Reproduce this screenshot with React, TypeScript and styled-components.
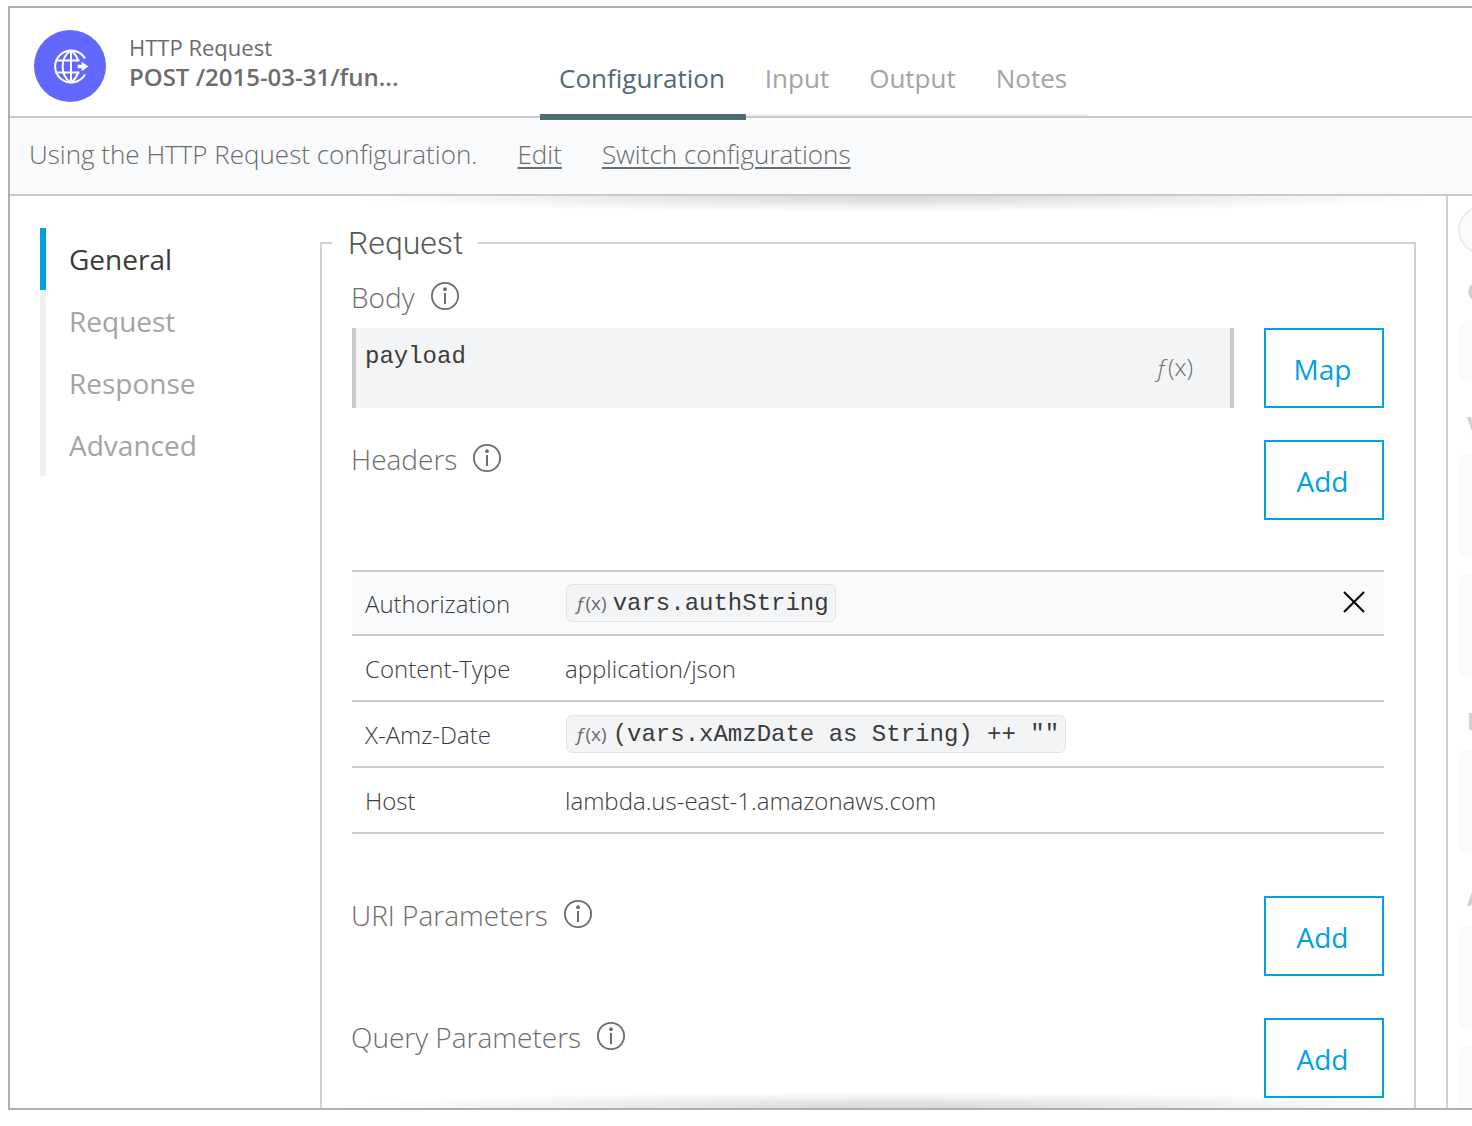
import React, { useState } from "react";
import styled, { createGlobalStyle } from "styled-components";

const sans = '"Open Sans", "Noto Sans", sans-serif';
const mono = '"Liberation Mono", monospace';

const color = {
  frame: "#aeafaf",
  line: "#c9cacb",
  field: "#d1d1d1",
  faint: "#f0f0f0",
  banner: "#f9fafb",
  text: "#3a3b3c",
  muted: "#6b6c6d",
  disabled: "#a3a4a4",
  teal: "#506a73",
  blue: "#00a2df",
  badge: "#6168fb",
};

const GlobalStyle = createGlobalStyle`
  *, *::before, *::after { box-sizing: border-box; }
  body { margin: 0; background: #fff; font-family: ${sans}; color: ${color.text}; }
  button, textarea { font: inherit; color: inherit; margin: 0; padding: 0; border: 0; background: none; }
  button { cursor: pointer; }
`;

const Frame = styled.div`
  display: flex;
  flex-direction: column;
  height: calc(100vh - 22px);
  margin: 6px 0 16px 8px;
  border: 2px solid ${color.frame};
  border-right: 0;
  overflow: hidden;
`;

const Header = styled.header`
  display: flex;
  flex: none;
  height: 110px;
  border-bottom: 2px solid ${color.line};
`;

const Identity = styled.div`
  display: flex;
  align-items: flex-start;
  gap: 23px;
  flex: 0 0 530px;
  padding: 22px 24px 0;
`;

const Titles = styled.div`
  padding-top: 2px;
  line-height: 30px;
  color: ${color.muted};
`;

const Kind = styled.div`
  font-size: 22px;
`;

const Title = styled.h1`
  margin: 0;
  font-size: 24px;
  font-weight: 600;
`;

const TabList = styled.div`
  display: flex;
  align-items: stretch;
`;

const Tab = styled.button<{ $active: boolean }>`
  position: relative;
  display: flex;
  align-items: flex-start;
  padding: 52px 21px 0 19px;
  margin-bottom: ${(p) => (p.$active ? "-4px" : "0")};
  border-bottom: ${(p) => (p.$active ? `6px solid ${color.teal}` : `2px solid ${color.faint}`)};
  font-size: 26px;
  line-height: 36px;
  color: ${(p) => (p.$active ? color.teal : color.disabled)};
`;

const Banner = styled.div`
  display: flex;
  flex: none;
  align-items: center;
  gap: 40px;
  height: 78px;
  padding: 0 19px 4px;
  border-bottom: 2px solid ${color.line};
  background: ${color.banner};
  font-size: 26px;
  font-weight: 300;
  color: ${color.muted};
`;

const BannerLink = styled.a`
  color: inherit;
  text-decoration: underline;
  text-decoration-thickness: 2px;
  text-underline-offset: 3px;
`;

const Main = styled.div`
  display: flex;
  flex: 1;
  min-height: 0;
`;

const SideNav = styled.nav`
  flex: 0 0 310px;
  padding: 32px 30px;
`;

const NavItem = styled.button<{ $active: boolean }>`
  display: block;
  width: 100%;
  height: 62px;
  padding: 0 0 0 23px;
  border-left: 6px solid ${(p) => (p.$active ? color.blue : color.faint)};
  text-align: left;
  font-size: 28px;
  color: ${(p) => (p.$active ? color.text : color.disabled)};
`;

const Center = styled.main`
  flex: 1;
  min-width: 0;
  padding: 25px 30px 0 0;
  overflow: hidden;
  background:
    radial-gradient(farthest-side at 50% 0, rgba(0, 0, 0, 0.16), transparent) right top / calc(100% - 20px) 16px no-repeat,
    radial-gradient(farthest-side at 50% 100%, rgba(0, 0, 0, 0.16), transparent) right bottom / calc(100% - 20px) 16px no-repeat;
`;

const Group = styled.fieldset`
  margin: 0;
  padding: 13px 30px 40px;
  border: 2px solid ${color.field};
  min-width: 0;
`;

const Legend = styled.legend`
  margin-left: -20px;
  padding: 0 15px 0 16px;
  font-family: Roboto, ${sans};
  font-size: 32px;
  font-weight: 300;
  line-height: 44px;
  color: #58595a;
`;

const Row = styled.div<{ $gap?: number }>`
  display: flex;
  align-items: flex-start;
  justify-content: space-between;
  gap: 30px;
  margin-top: ${(p) => p.$gap ?? 0}px;
`;

const FieldHead = styled.div`
  display: flex;
  align-items: center;
  gap: 16px;
  height: 40px;
  margin-left: -1px;
  padding-bottom: 2px;
  font-size: 28px;
  font-weight: 300;
  color: ${color.muted};
`;

const InfoButton = styled.button`
  display: flex;
  padding-bottom: 2px;
`;

const OutlineButton = styled.button`
  flex: none;
  width: 120px;
  height: 80px;
  padding: 2px 3px 0 0;
  border: 2px solid ${color.blue};
  background: #fff;
  font-size: 28px;
  color: ${color.blue};
`;

const Expression = styled.div`
  display: flex;
  flex: 1;
  height: 80px;
  padding-right: 37px;
  border: solid ${color.line};
  border-width: 0 4px;
  background: #f3f4f6;
`;

const ExpressionInput = styled.textarea`
  flex: 1;
  min-width: 0;
  padding: 14px 9px;
  outline: 0;
  resize: none;
  overflow: hidden;
  font-family: ${mono};
  font-size: 24px;
  line-height: 30px;
`;

const FxToggle = styled.button`
  padding-bottom: 4px;
  font-size: 24px;
  font-weight: 300;
  color: ${color.muted};
`;

const FxGlyph = styled.span`
  font-style: italic;
`;

const Table = styled.table`
  width: 100%;
  margin-top: 50px;
  border-collapse: separate;
  border-spacing: 0;
  table-layout: fixed;
  font-size: 24px;
  font-weight: 300;
`;

const HeaderRow = styled.tr<{ $selected: boolean }>`
  background: ${(p) => (p.$selected ? color.banner : "transparent")};

  & > * {
    height: 66px;
    padding: 0;
    border-bottom: 2px solid ${color.line};
    text-align: left;
    font-weight: 300;
  }

  &:first-child > * {
    border-top: 2px solid ${color.line};
  }
`;

const NameCell = styled.th`
  width: 213px;

  && {
    padding-left: 13px;
  }
`;

const ActionCell = styled.td`
  width: 60px;
`;

const Chip = styled.span`
  display: inline-flex;
  align-items: center;
  gap: 6px;
  height: 38px;
  margin-left: 1px;
  padding: 0 6px 0 8px;
  border: 1px solid #e3e4e6;
  border-radius: 6px;
  background: #f3f4f6;
  vertical-align: middle;
  white-space: pre;
`;

const ChipFx = styled.span`
  font-size: 19px;
  font-weight: 400;
  color: ${color.muted};
`;

const ChipCode = styled.code`
  font-family: ${mono};
  font-size: 24px;
  font-weight: 400;
`;

const RemoveButton = styled.button`
  display: flex;
  padding: 0 19px 2px;
`;

const DataPanel = styled.aside`
  flex: 0 0 26px;
  padding: 10px 0 0 10px;
  border-left: 2px solid ${color.field};
  overflow: hidden;
`;

const SearchPill = styled.div`
  width: 240px;
  height: 48px;
  border: 2px solid #ededed;
  border-radius: 24px;
  background: #fafbfb;
`;

const PanelSection = styled.section`
  display: flex;
  flex-direction: column;
  gap: 16px;
  width: 240px;

  & + & {
    margin-top: 6px;
  }
`;

const PanelHeading = styled.h2`
  margin: 0 0 -16px;
  padding: 21px 0 13px 9px;
  font-size: 24px;
  font-weight: 700;
  line-height: 32px;
  color: #cfd0d0;
`;

const PanelCard = styled.div<{ $height: number }>`
  height: ${(p) => p.$height}px;
  border-radius: 10px;
  background: #fafcfb;
`;

const BadgeIcon = () => (
  <svg width="72" height="72" viewBox="0 0 72 72" fill="none" aria-hidden="true">
    <circle cx="36" cy="36" r="36" fill={color.badge} />
    <g stroke="#fff" strokeWidth="2">
      <path d="M51 28.5A16 16 0 1 0 51 44.5" />
      <path d="M36.5 20.5C26 28 26 45 36.5 52.5" />
      <path d="M37 20.5C41 23.5 43.3 27 44 31" />
      <path d="M37 52.5C41 49.5 43.3 46 44 42" />
      <path d="M37 20.5V52.5M21.5 30.5H45.5M21.5 42.5H45.5" />
    </g>
    <path d="M43.7 34.8H47.7V31.7L54.3 36.5L47.7 41.3V38.2H43.7Z" fill="#fff" />
  </svg>
);

const InfoIcon = () => (
  <svg width="28" height="28" viewBox="0 0 28 28" fill="none" aria-hidden="true">
    <circle cx="14" cy="14" r="13.1" stroke={color.muted} strokeWidth="1.8" />
    <circle cx="14" cy="7.2" r="1.9" fill={color.muted} />
    <path d="M14 11V22" stroke={color.muted} strokeWidth="2" />
  </svg>
);

const CloseIcon = () => (
  <svg width="22" height="22" viewBox="0 0 22 22" fill="none" aria-hidden="true">
    <path d="M1 1L21 21M21 1L1 21" stroke="#000" strokeWidth="2" />
  </svg>
);

const Fx = () => (
  <>
    <FxGlyph>ƒ</FxGlyph>(x)
  </>
);

const Info = ({ topic }: { topic: string }) => (
  <InfoButton type="button" aria-label={`About ${topic}`}>
    <InfoIcon />
  </InfoButton>
);

const ParameterRow = ({ name, gap }: { name: string; gap: number }) => (
  <Row $gap={gap}>
    <FieldHead>
      <span>{name}</span>
      <Info topic={name} />
    </FieldHead>
    <OutlineButton type="button">Add</OutlineButton>
  </Row>
);

const tabs = ["Configuration", "Input", "Output", "Notes"];
const sections = ["General", "Request", "Response", "Advanced"];

const headers = [
  { name: "Authorization", value: "vars.authString", expression: true },
  { name: "Content-Type", value: "application/json", expression: false },
  { name: "X-Amz-Date", value: '(vars.xAmzDate as String) ++ ""', expression: true },
  { name: "Host", value: "lambda.us-east-1.amazonaws.com", expression: false },
];

const panelSections = [
  { label: "C", cards: [62] },
  { label: "V", cards: [104, 104] },
  { label: "P", cards: [104] },
  { label: "A", cards: [104, 104] },
];

export default function App() {
  const [tab, setTab] = useState("Configuration");
  const [section, setSection] = useState("General");
  const [selected, setSelected] = useState("Authorization");
  const [body, setBody] = useState("payload");

  return (
    <>
      <GlobalStyle />
      <Frame>
        <Header>
          <Identity>
            <BadgeIcon />
            <Titles>
              <Kind>HTTP Request</Kind>
              <Title>POST /2015-03-31/fun...</Title>
            </Titles>
          </Identity>
          <TabList role="tablist">
            {tabs.map((name) => (
              <Tab
                key={name}
                type="button"
                role="tab"
                aria-selected={tab === name}
                $active={tab === name}
                onClick={() => setTab(name)}
              >
                {name}
              </Tab>
            ))}
          </TabList>
        </Header>
        <Banner>
          <span>Using the HTTP Request configuration.</span>
          <BannerLink href="#edit">Edit</BannerLink>
          <BannerLink href="#switch">Switch configurations</BannerLink>
        </Banner>
        <Main>
          <SideNav>
            {sections.map((name) => (
              <NavItem
                key={name}
                type="button"
                $active={section === name}
                onClick={() => setSection(name)}
              >
                {name}
              </NavItem>
            ))}
          </SideNav>
          <Center>
            <Group>
              <Legend>Request</Legend>
              <FieldHead>
                <label htmlFor="body">Body</label>
                <Info topic="Body" />
              </FieldHead>
              <Row $gap={10}>
                <Expression>
                  <ExpressionInput
                    id="body"
                    spellCheck={false}
                    value={body}
                    onChange={(e) => setBody(e.target.value)}
                  />
                  <FxToggle type="button">
                    <Fx />
                  </FxToggle>
                </Expression>
                <OutlineButton type="button">Map</OutlineButton>
              </Row>
              <ParameterRow name="Headers" gap={32} />
              <Table>
                <tbody>
                  {headers.map((h) => (
                    <HeaderRow
                      key={h.name}
                      $selected={selected === h.name}
                      onMouseEnter={() => setSelected(h.name)}
                    >
                      <NameCell scope="row">{h.name}</NameCell>
                      <td>
                        {h.expression ? (
                          <Chip>
                            <ChipFx>
                              <Fx />
                            </ChipFx>
                            <ChipCode>{h.value}</ChipCode>
                          </Chip>
                        ) : (
                          h.value
                        )}
                      </td>
                      <ActionCell>
                        {selected === h.name && (
                          <RemoveButton type="button" aria-label={`Remove ${h.name}`}>
                            <CloseIcon />
                          </RemoveButton>
                        )}
                      </ActionCell>
                    </HeaderRow>
                  ))}
                </tbody>
              </Table>
              <ParameterRow name="URI Parameters" gap={62} />
              <ParameterRow name="Query Parameters" gap={42} />
            </Group>
          </Center>
          <DataPanel>
            <SearchPill />
            {panelSections.map((s) => (
              <PanelSection key={s.label}>
                <PanelHeading>{s.label}</PanelHeading>
                {s.cards.map((height, i) => (
                  <PanelCard key={i} $height={height} />
                ))}
              </PanelSection>
            ))}
          </DataPanel>
        </Main>
      </Frame>
    </>
  );
}
